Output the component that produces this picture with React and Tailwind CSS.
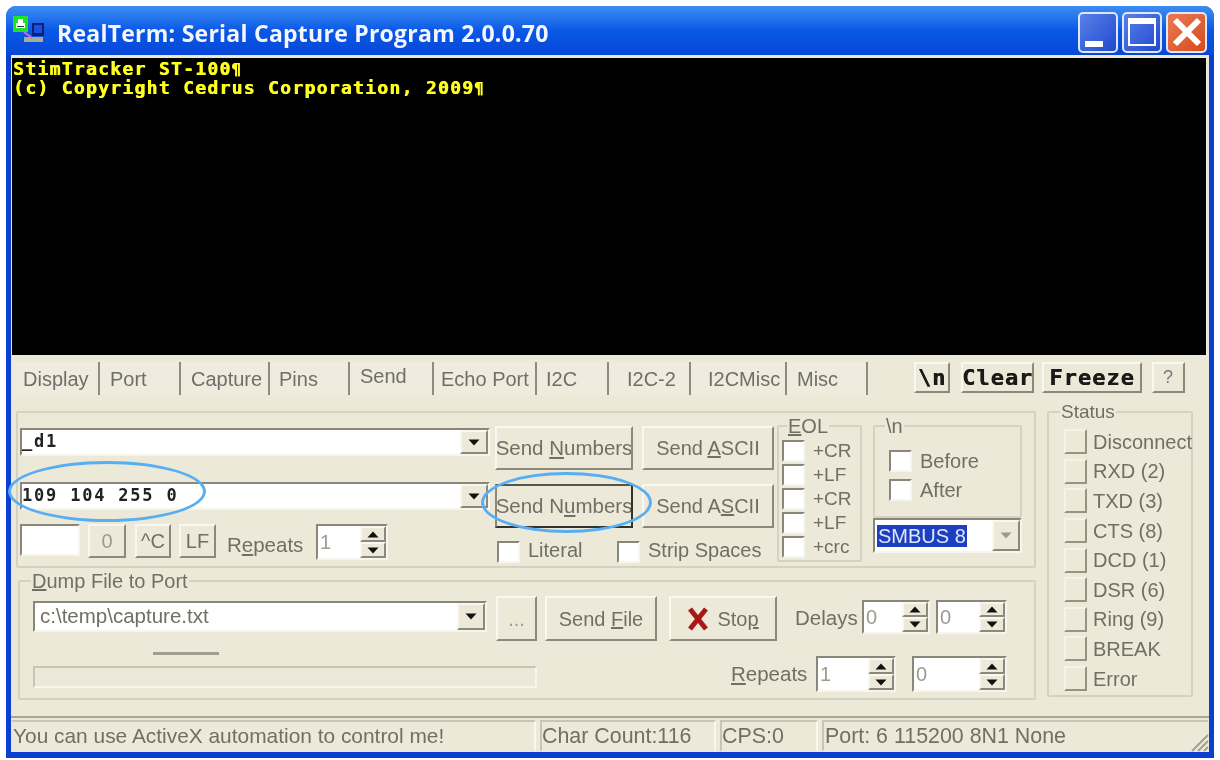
const TABS = [
  { label: 'Display', cls: 'w-[86px] pl-[9px]' },
  { label: 'Port', cls: 'w-[81px] pl-[10px]' },
  { label: 'Capture', cls: 'w-[89px] pl-[10px]' },
  { label: 'Pins', cls: 'w-[80px] pl-[9px] border-r-0' },
  { label: 'Send', cls: 'w-[84px] pl-[10px] pb-[6px] bg-[#ece9d8]' },
  { label: 'Echo Port', cls: 'w-[103px] pl-[7px]' },
  { label: 'I2C', cls: 'w-[72px] pl-[9px]' },
  { label: 'I2C-2', cls: 'w-[82px] pl-[18px]' },
  { label: 'I2CMisc', cls: 'w-[96px] pl-[17px]' },
  { label: 'Misc', cls: 'w-[81px] pl-[10px]' },
];

const STATUS = ['Disconnect', 'RXD (2)', 'TXD (3)', 'CTS (8)', 'DCD (1)', 'DSR (6)', 'Ring (9)', 'BREAK', 'Error'];

const raised = 'bg-[#ece9d8] border-2 border-t-[#f8f7f0] border-l-[#f8f7f0] border-r-[#8c897b] border-b-[#8c897b]';
const focusRing = 'bg-[#ece9d8] border-2 border-t-[#55554c] border-l-[#8c897b] border-r-[#33332e] border-b-[#33332e]';
const sunken = 'bg-white border-2 border-t-[#8a877a] border-l-[#8a877a] border-r-[#f6f5ee] border-b-[#f6f5ee]';

const Btn = ({ className = '', focused, children }) => (
  <div className={`${focused ? focusRing : raised} flex items-center justify-center whitespace-nowrap overflow-hidden shrink-0 ${className}`}>
    {children}
  </div>
);

const Arrow = ({ up, color = '#111' }) => (
  <svg width="12" height="7" viewBox="0 0 12 7">
    <path d={up ? 'M6 0.5 L11.5 6.5 H0.5 Z' : 'M0.5 0.5 H11.5 L6 6.5 Z'} fill={color} />
  </svg>
);

const Combo = ({ className = '', text, mono, muted }) => (
  <div className={`${sunken} flex items-center shrink-0 ${className}`}>
    <div className={`flex-1 whitespace-nowrap ${mono ? "font-['DejaVu_Sans_Mono',monospace] font-bold text-[17px] text-[#222] tracking-[1.8px]" : 'pl-[2px]'}`}>
      {text}
    </div>
    <div className={`${raised} w-[28px] h-full flex items-center justify-center`}>
      <Arrow color={muted ? '#9a9a90' : '#111'} />
    </div>
  </div>
);

const Spin = ({ className = '', value }) => (
  <div className={`${sunken} flex items-stretch shrink-0 ${className}`}>
    <div className="flex-1 pl-[2px] text-[#9b9b92] flex items-center">{value}</div>
    <div className="w-[26px] flex flex-col">
      <div className={`${raised} flex-1 flex items-center justify-center`}><Arrow up /></div>
      <div className={`${raised} flex-1 flex items-center justify-center`}><Arrow /></div>
    </div>
  </div>
);

const Check = ({ className = '' }) => <div className={`${sunken} w-[23px] h-[22px] shrink-0 ${className}`} />;

const Group = ({ legend, className = '', legendCls = '', children }) => (
  <div className={`relative border-2 border-[#d5d2c1] rounded-[2px] shrink-0 ${className}`}>
    <div className={`absolute -top-[12px] bg-[#ece9d8] px-[1px] leading-[22px] ${legendCls}`}>{legend}</div>
    {children}
  </div>
);

const TitleButton = ({ className = '', children }) => (
  <div className={`w-[40px] h-[41px] rounded-[5px] border-2 border-[#dfe8fb] flex items-center justify-center relative overflow-hidden ${className}`}>
    {children}
  </div>
);

const App = () => {
  return (
    <div className="relative w-[1220px] h-[760px] bg-white overflow-hidden pt-[6px] pl-[6px] font-['Liberation_Sans',Arial,sans-serif] text-[20px] text-[#706f66]">
      <div className="w-[1208px] h-[752px] rounded-t-[10px] bg-[#0a3fd2] flex flex-col blur-[0.7px]">
        {/* Title bar */}
        <div className="h-[49px] shrink-0 rounded-t-[10px] bg-gradient-to-b from-[#3d8df2] via-[#0a58e6] to-[#0847d6] flex items-center pl-[6px] pr-[6px]">
          <svg width="36" height="30" viewBox="0 0 36 30" className="shrink-0 -mt-[4px]">
            <rect x="20" y="9" width="12" height="13" fill="#10206a" />
            <rect x="22" y="11" width="8" height="8" fill="#1a50e8" />
            <rect x="12" y="23" width="19" height="5" fill="#a9a99c" />
            <path d="M12 18 L20 24" stroke="#d070c0" strokeWidth="2" />
            <rect x="1" y="2" width="15" height="16" fill="#1fe02a" />
            <rect x="4" y="9" width="9" height="5" fill="#fff" />
            <rect x="6" y="5" width="5" height="4" fill="#fff" />
            <rect x="5" y="12" width="7" height="1" fill="#333" />
          </svg>
          <div className="ml-[9px] mt-[6px] font-['Open_Sans',sans-serif] font-bold text-[23px] text-[#f4f6fc] tracking-[0.25px] whitespace-nowrap">
            RealTerm: Serial Capture Program 2.0.0.70
          </div>
          <div className="ml-auto flex gap-[4px] mt-[3px] -translate-x-[1px]">
            <TitleButton className="bg-gradient-to-br from-[#5a80e8] to-[#2048d0]">
              <div className="absolute left-[5px] bottom-[4px] w-[18px] h-[6px] bg-white" />
            </TitleButton>
            <TitleButton className="bg-gradient-to-br from-[#5a80e8] to-[#2048d0]">
              <div className="w-[28px] h-[28px] border-2 border-t-[6px] border-white" />
            </TitleButton>
            <TitleButton className="bg-gradient-to-br from-[#ea7a50] to-[#d64a1c] w-[41px]">
              <svg width="30" height="30" viewBox="0 0 30 30">
                <path d="M3 3 L27 27 M27 3 L3 27" stroke="#fff" strokeWidth="6" />
              </svg>
            </TitleButton>
          </div>
        </div>

        <div className="mx-[5px] h-[697px] bg-[#ece9d8] flex flex-col shrink-0">
          {/* Terminal */}
          <div className="mt-[3px] ml-[1px] w-[1194px] h-[297px] bg-black shrink-0 pt-[1px] pl-[1px] font-['DejaVu_Sans_Mono',monospace] font-bold text-[18px] tracking-[1.3px] text-[#ffff1e] [text-shadow:0.6px_0_0_#ffff1e] whitespace-pre">
            <div className="h-[19px] leading-[19px]">StimTracker ST-100<span className="text-[15px] leading-none">¶</span></div>
            <div className="h-[19px] leading-[19px]">(c) Copyright Cedrus Corporation, 2009<span className="text-[15px] leading-none">¶</span></div>
          </div>

          {/* Tabs and tools */}
          <div className="flex items-start mt-[7px] pl-[3px] shrink-0 h-[33px]">
            {TABS.map((tab) => (
              <div
                key={tab.label}
                className={`h-[33px] shrink-0 bg-[#efecdf] border-r-2 border-[#8f8c7e] flex items-center whitespace-nowrap ${tab.cls}`}
              >
                {tab.label}
              </div>
            ))}
            <div className="flex ml-[46px] font-['DejaVu_Sans_Mono',monospace] font-bold text-[22px] text-[#1a1a1a] tracking-[1px] [text-shadow:0.5px_0_0_#1a1a1a]">
              <Btn className="w-[36px] h-[31px]">\n</Btn>
              <Btn className="w-[73px] h-[31px] ml-[11px]">Clear</Btn>
              <Btn className="w-[100px] h-[31px] ml-[8px]">Freeze</Btn>
              <Btn className="w-[33px] h-[31px] ml-[10px] font-['Liberation_Sans',sans-serif] font-normal text-[18px] text-[#777] [text-shadow:none]">?</Btn>
            </div>
          </div>

          <div className="flex items-start mt-[16px] pl-[5px] shrink-0">
            <div className="w-[1020px] shrink-0">
              {/* Send */}
              <div className="flex items-start h-[157px] border-2 border-[#d5d2c1] rounded-[2px] pl-[2px]">
                <div className="w-[470px] mt-[15px] shrink-0">
                  <Combo className="h-[28px]" text="_d1" mono />
                  <Combo className="h-[28px] mt-[26px]" text="109 104 255 0" mono />
                  <div className="flex items-start mt-[14px]">
                    <div className={`${sunken} w-[60px] h-[32px] shrink-0`} />
                    <Btn className="w-[38px] h-[34px] ml-[8px] text-[#9b9b92]">0</Btn>
                    <Btn className="w-[36px] h-[34px] ml-[9px]">^C</Btn>
                    <Btn className="w-[37px] h-[34px] ml-[8px]">LF</Btn>
                    <div className="ml-[11px] mt-[6px] w-[89px] text-[20.5px]">R<u>e</u>peats</div>
                    <Spin className="w-[72px] h-[36px]" value="1" />
                  </div>
                </div>

                <div className="w-[279px] ml-[5px] mt-[13px] shrink-0">
                  <div className="flex gap-[9px]">
                    <Btn className="w-[138px] h-[44px]"><span className="text-[20.5px]">Send <u>N</u>umbers</span></Btn>
                    <Btn className="w-[132px] h-[44px]"><span>Send <u>A</u>SCII</span></Btn>
                  </div>
                  <div className="flex gap-[9px] mt-[14px]">
                    <Btn focused className="w-[138px] h-[44px]"><span className="text-[20.5px]">Send N<u>u</u>mbers</span></Btn>
                    <Btn className="w-[132px] h-[44px]"><span>Send A<u>S</u>CII</span></Btn>
                  </div>
                  <div className="flex items-center h-[22px] mt-[13px] pl-[2px]">
                    <Check />
                    <div className="ml-[8px] w-[89px] mb-[4px]">Literal</div>
                    <Check />
                    <div className="ml-[8px] mb-[4px] whitespace-nowrap">Strip Spaces</div>
                  </div>
                </div>

                <Group
                  legend={<><u>E</u>OL</>}
                  className="w-[85px] h-[137px] ml-[3px] mt-[12px] pl-[3px] pt-[12px]"
                  legendCls="left-[8px]"
                >
                  {['+CR', '+LF', '+CR', '+LF', '+crc'].map((label, i) => (
                    <div key={i} className="flex items-center h-[24px] text-[19px]">
                      <Check />
                      <div className="ml-[8px]">{label}</div>
                    </div>
                  ))}
                </Group>

                <div className="w-[149px] ml-[11px] mt-[12px] shrink-0">
                  <Group legend="\n" className="h-[93px] pl-[14px] pt-[22px]" legendCls="left-[10px]">
                    <div className="flex items-center h-[23px]">
                      <Check />
                      <div className="ml-[8px]">Before</div>
                    </div>
                    <div className="flex items-center h-[23px] mt-[6px]">
                      <Check />
                      <div className="ml-[8px]">After</div>
                    </div>
                  </Group>
                  <Combo
                    className="h-[35px]"
                    muted
                    text={<span className="bg-[#1c3fc0] text-[#dfe6f8] px-[1px] whitespace-nowrap">SMBUS 8</span>}
                  />
                </div>
              </div>

              {/* Dump file */}
              <Group
                legend={<><u>D</u>ump File to Port</>}
                className="w-[1018px] h-[120px] ml-[2px] mt-[12px]"
                legendCls="left-[11px]"
              >
                <div className="flex items-start mt-[14px] pl-[13px]">
                  <Combo className="w-[454px] h-[31px] mt-[5px]" text={<span className="ml-[3px] text-[20.5px]">c:\temp\capture.txt</span>} />
                  <Btn className="w-[41px] h-[45px] ml-[9px] text-[#9b9b92]">...</Btn>
                  <Btn className="w-[112px] h-[45px] ml-[8px]"><span>Send <u>F</u>ile</span></Btn>
                  <Btn className="w-[108px] h-[45px] ml-[12px]">
                    <svg width="22" height="24" viewBox="0 0 22 24" className="mr-[8px]">
                      <path d="M3 2 L19 22 M19 2 L3 22" stroke="#a81818" strokeWidth="5" />
                    </svg>
                    <span>Sto<u>p</u></span>
                  </Btn>
                  <div className="ml-[18px] mt-[7px] w-[67px] text-[20.5px]">Delays</div>
                  <Spin className="w-[68px] h-[34px] mt-[4px]" value="0" />
                  <Spin className="w-[71px] h-[34px] mt-[4px] ml-[6px]" value="0" />
                </div>
                <div className="flex items-start mt-[11px] pl-[13px]">
                  <div className="w-[504px] shrink-0">
                    <div className="ml-[120px] w-[66px] h-[3px] bg-[#a09e90]" />
                    <div className="mt-[11px] h-[22px] border-2 border-t-[#c8c5b4] border-l-[#c8c5b4] border-r-[#f6f5ee] border-b-[#f6f5ee]" />
                  </div>
                  <div className="ml-[194px] w-[85px] mt-[7px] shrink-0 text-[20.5px]"><u>R</u>epeats</div>
                  <Spin className="w-[80px] h-[36px] mt-[4px]" value="1" />
                  <Spin className="w-[95px] h-[36px] mt-[4px] ml-[16px]" value="0" />
                </div>
              </Group>
            </div>

            {/* Status */}
            <Group legend="Status" className="w-[146px] h-[286px] ml-[11px] pl-[15px] pt-[14px]" legendCls="left-[11px] text-[19px]">
              {STATUS.map((label) => (
                <div key={label} className="flex items-center h-[29.6px]">
                  <div className="w-[23px] h-[25px] shrink-0 border-2 border-t-[#f4f3ea] border-l-[#f4f3ea] border-r-[#96937f] border-b-[#96937f]" />
                  <div className="ml-[6px] whitespace-nowrap">{label}</div>
                </div>
              ))}
            </Group>
          </div>

          {/* Status bar */}
          <div className="relative mt-auto h-[36px] shrink-0 border-t-2 border-[#a8a595] flex gap-[4px] text-[21.4px] pt-[2px]">
            <div className="w-[525px] flex items-center border-2 border-t-[#c8c5b4] border-l-transparent border-r-[#f8f7f0] border-b-transparent whitespace-nowrap text-[20.9px]">
              You can use ActiveX automation to control me!
            </div>
            <div className="w-[176px] flex items-center border-2 border-t-[#c8c5b4] border-l-[#c8c5b4] border-r-[#f8f7f0] border-b-transparent whitespace-nowrap">
              Char Count:116
            </div>
            <div className="w-[98px] flex items-center border-2 border-t-[#c8c5b4] border-l-[#c8c5b4] border-r-[#f8f7f0] border-b-transparent whitespace-nowrap">
              CPS:0
            </div>
            <div className="flex-1 pl-[1px] flex items-center border-2 border-t-[#c8c5b4] border-l-[#c8c5b4] border-r-transparent border-b-transparent whitespace-nowrap">
              Port: 6 115200 8N1 None
            </div>
            <svg width="20" height="20" viewBox="0 0 20 20" className="absolute right-0 bottom-0">
              <path d="M19 3 L3 19 M19 9 L9 19 M19 15 L15 19" stroke="#a3a091" strokeWidth="2" />
            </svg>
          </div>
        </div>
      </div>

      {/* Callout circles */}
      <div className="absolute left-[8px] top-[461px] w-[198px] h-[61px] rounded-[50%] border-[3px] border-[#58aef2]" />
      <div className="absolute left-[481px] top-[472px] w-[171px] h-[61px] rounded-[50%] border-[3px] border-[#58aef2]" />
    </div>
  );
};

export default App;
